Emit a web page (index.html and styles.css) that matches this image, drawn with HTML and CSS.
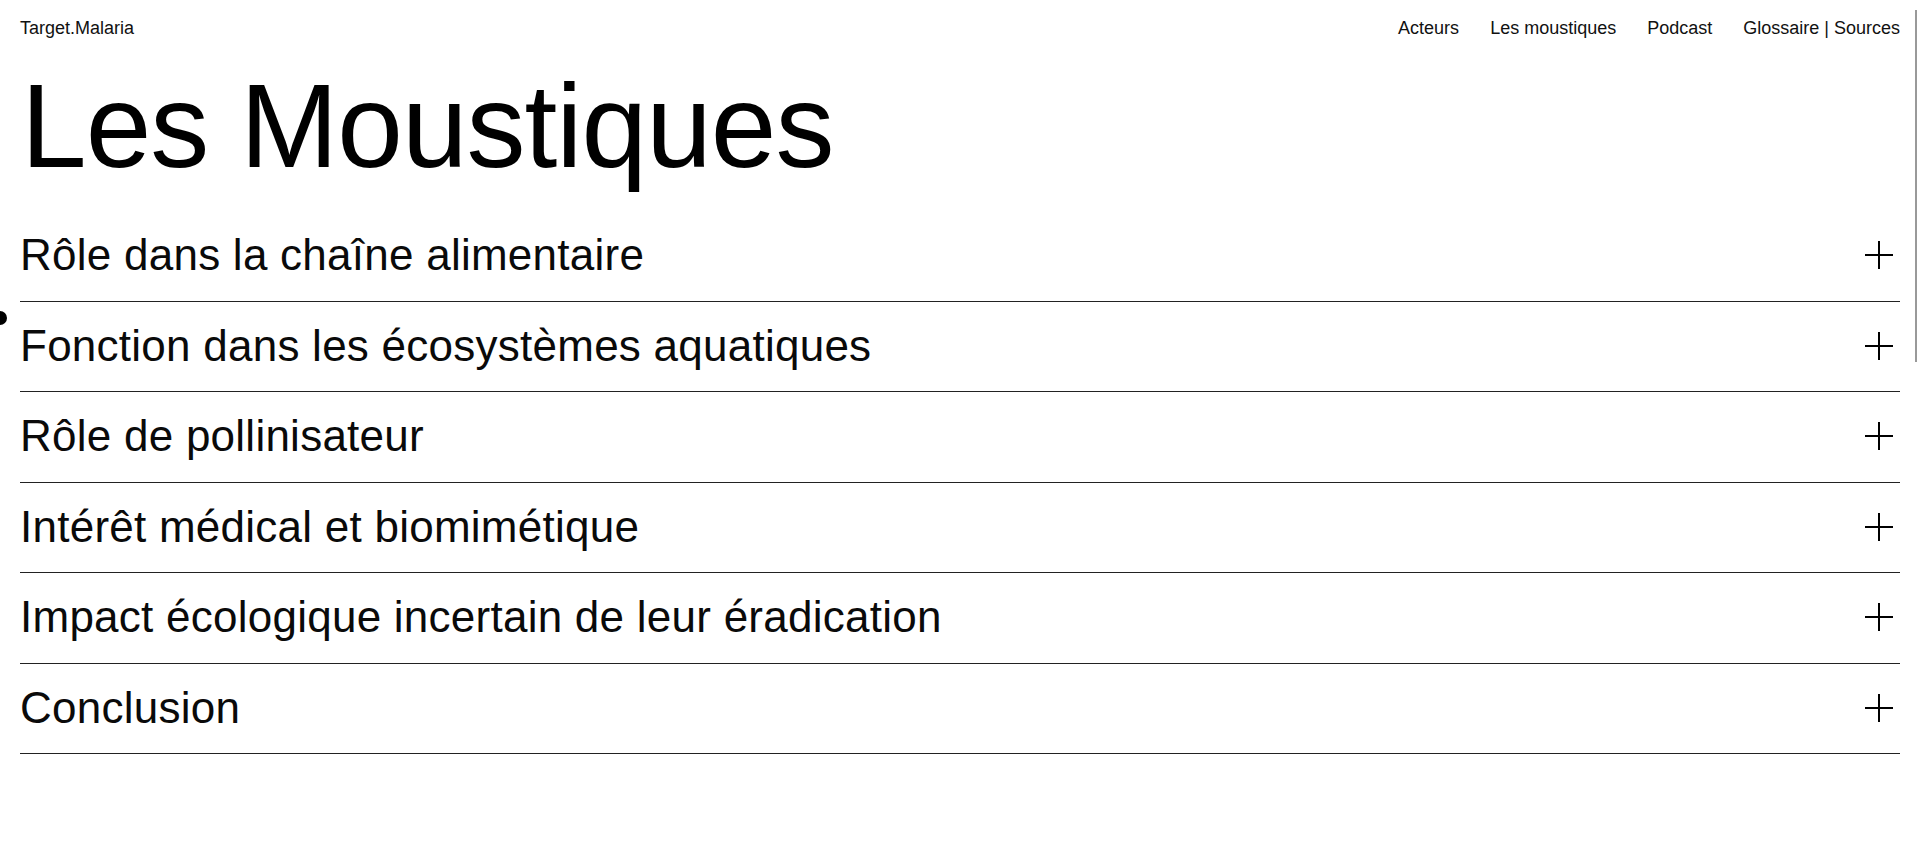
FILE: index.html
```html
<!DOCTYPE html>
<html lang="fr">
<head>
    <meta charset="UTF-8">
    <meta name="viewport" content="width=device-width, initial-scale=1.0">
    <title>Les Moustiques - Target.Malaria</title>
    <link rel="stylesheet" href="styles.css">
</head>
<body>
    <div class="cursor-dot"></div>
    <div class="scroll-thumb"></div>

    <header class="site-header">
        <a class="brand" href="#">Target.Malaria</a>
        <nav class="main-nav">
            <a href="#">Acteurs</a>
            <a href="#">Les moustiques</a>
            <a href="#">Podcast</a>
            <a href="#">Glossaire | Sources</a>
        </nav>
    </header>

    <main>
        <h1 class="page-title">Les Moustiques</h1>

        <div class="accordion">
            <div class="accordion-item">
                <span class="accordion-title">Rôle dans la chaîne alimentaire</span>
                <span class="plus"></span>
            </div>
            <div class="accordion-item">
                <span class="accordion-title">Fonction dans les écosystèmes aquatiques</span>
                <span class="plus"></span>
            </div>
            <div class="accordion-item">
                <span class="accordion-title">Rôle de pollinisateur</span>
                <span class="plus"></span>
            </div>
            <div class="accordion-item">
                <span class="accordion-title">Intérêt médical et biomimétique</span>
                <span class="plus"></span>
            </div>
            <div class="accordion-item">
                <span class="accordion-title">Impact écologique incertain de leur éradication</span>
                <span class="plus"></span>
            </div>
            <div class="accordion-item">
                <span class="accordion-title">Conclusion</span>
                <span class="plus"></span>
            </div>
        </div>
    </main>
</body>
</html>
```

FILE: styles.css
```css
body {
    font-family: 'Liberation Sans', Arial, sans-serif;
    background-color: #fff;
    color: #000;
    margin: 0;
    padding: 0 19px 0 20px;
    overflow: hidden;
}

a {
    color: inherit;
    text-decoration: none;
}

.site-header {
    display: flex;
    justify-content: space-between;
    padding-top: 19px;
    font-size: 18px;
    line-height: 1;
    color: #111;
}

.main-nav {
    display: flex;
    gap: 31px;
}

.page-title {
    font-size: 118px;
    font-weight: normal;
    line-height: 1;
    letter-spacing: -1px;
    margin: 30px 0 26px 1px;
}

.accordion-item {
    display: flex;
    justify-content: space-between;
    align-items: center;
    padding: 22px 0 23.5px;
    border-bottom: 1px solid #222;
    cursor: pointer;
}

.accordion-title {
    font-size: 44px;
    line-height: 1;
    letter-spacing: 0.25px;
    color: #0a0a0a;
}

.plus {
    position: relative;
    width: 28px;
    height: 28px;
    margin-right: 7px;
}

.plus::before,
.plus::after {
    content: '';
    position: absolute;
    background-color: #000;
}

.plus::before {
    left: 0;
    right: 0;
    top: 13px;
    height: 2px;
}

.plus::after {
    top: 0;
    bottom: 0;
    left: 13px;
    width: 2px;
}

.cursor-dot {
    position: fixed;
    left: -7px;
    top: 311px;
    width: 14px;
    height: 14px;
    border-radius: 50%;
    background-color: #000;
}

.scroll-thumb {
    position: fixed;
    right: 2px;
    top: 10px;
    width: 2px;
    height: 352px;
    background-color: #999;
}
```
